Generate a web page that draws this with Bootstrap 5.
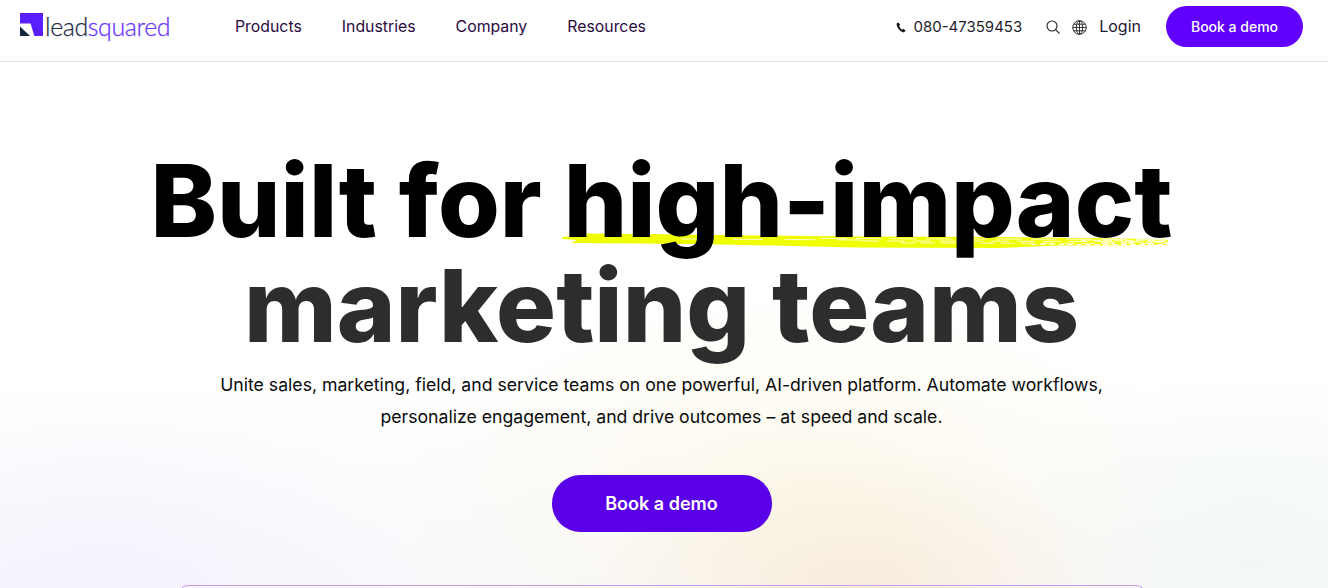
<!DOCTYPE html>
<html lang="en">
<head>
    <meta charset="UTF-8">
    <meta name="viewport" content="width=device-width, initial-scale=1.0">
    <title>LeadSquared</title>
    <link href="https://cdn.jsdelivr.net/npm/bootstrap@5.3.0/dist/css/bootstrap.min.css" rel="stylesheet">
    <style>
        body {
            font-family: "Inter", "Liberation Sans", sans-serif;
            background: #fff;
            height: 588px;
            overflow: hidden;
        }

        .top-bar {
            height: 62px;
            padding: 0 25px 9px 20px;
            border-bottom: 1px solid #e3e3e3;
        }

        .brand-link {
            width: 215px;
            gap: 2px;
        }

        .brand-link svg {
            margin-top: -4px;
        }

        .brand-word {
            font-family: "Lato", sans-serif;
            font-weight: 300;
            font-size: 25px;
            line-height: 1;
            letter-spacing: -0.4px;
            color: #1f2d45;
            -webkit-text-stroke: .25px currentColor;
        }

        .brand-word span {
            color: #6a35ff;
        }

        .menu-links {
            gap: 40px;
            padding-top: 2px;
        }

        .menu-links a {
            font-size: 15.84px;
            color: #2c0a3f;
            text-decoration: none;
        }

        .phone-link {
            font-size: 15px;
            color: #1d1d2b;
            margin-right: 24px;
            padding-top: 2px;
        }

        .phone-link svg {
            margin-right: 7px;
        }

        .nav-glyph {
            margin-top: 2px;
        }

        .login-link {
            font-size: 16px;
            color: #1d1b33;
            margin-left: 12px;
            margin-right: 25px;
            text-decoration: none;
        }

        .demo-btn {
            background: #6200ff;
            color: #fff;
            border: 0;
            border-radius: 50rem;
            font-weight: 500;
        }

        .demo-btn:hover {
            background: #5600e0;
            color: #fff;
        }

        .demo-small {
            width: 137px;
            height: 41px;
            font-size: 14px;
            padding: 0;
        }

        .demo-large {
            width: 220px;
            height: 57px;
            font-size: 18px;
            font-weight: 600;
            background: #5900e8;
            margin-top: 42px;
        }

        .hero-area {
            height: 526px;
            padding: 86px 5px 0 0;
            background:
                radial-gradient(ellipse 260px 140px at 860px 526px, rgba(244, 226, 204, .55), transparent),
                radial-gradient(ellipse 400px 220px at 800px 440px, rgba(252, 247, 224, .65), transparent),
                radial-gradient(ellipse 320px 200px at 100px 526px, rgba(238, 235, 255, .45), transparent),
                radial-gradient(ellipse 240px 170px at 1250px 480px, rgba(234, 247, 240, .5), transparent),
                linear-gradient(#fff 310px, #f9f8fb 100%);
        }

        .hero-title {
            font-size: 100px;
            font-weight: 800;
            line-height: 105px;
            margin: 0;
            color: #000;
            white-space: nowrap;
        }

        .hero-title .second-line {
            display: block;
            color: #2d2d2d;
        }

        .marked-word {
            position: relative;
            display: inline-block;
        }

        .brush-stroke {
            position: absolute;
            left: -3px;
            top: 84px;
            width: 610px;
            height: 18px;
            z-index: -1;
        }

        .title-stack {
            position: relative;
            z-index: 0;
        }

        .hero-copy {
            font-size: 17.65px;
            line-height: 32px;
            color: #0b0b0b;
            margin: 11px 0 0;
        }

        .media-frame {
            width: 968px;
            height: 40px;
            margin-top: 53px;
            border: 1px solid #c79cf2;
            border-radius: 10px;
        }
    </style>
</head>
<body>
    <!-- Navigation Bar -->
    <nav class="top-bar d-flex align-items-center">
        <a class="brand-link d-flex align-items-center text-decoration-none" href="#">
            <svg width="23" height="23" viewBox="0 0 24 24">
                <rect width="24" height="24" fill="#5a1fff"/>
                <path d="M0 11h11l4 13H0z" fill="#fff"/>
                <path d="M0 14 10.500 24H0z" fill="#14233f"/>
            </svg>
            <span class="brand-word">lead<span>squared</span></span>
        </a>
        <div class="menu-links d-flex align-items-center">
            <a href="#">Products</a>
            <a href="#">Industries</a>
            <a href="#">Company</a>
            <a href="#">Resources</a>
        </div>
        <div class="d-flex align-items-center ms-auto">
            <span class="phone-link d-flex align-items-center">
                <svg width="10" height="11" viewBox="0 0 10 11"><path d="M2.300.5 .6 1.600C.3 4.800 3.800 10 8 10.500l1.600-1.900-2.400-1.800-1.200.9C4.800 7.200 3.400 5 3.100 3.600l1.200-.7z" fill="#111"/></svg>
                080-47359453
            </span>
            <svg class="nav-glyph me-2" width="14" height="14" viewBox="0 0 14 14" fill="none" stroke="#222" stroke-width="1.100"><circle cx="6" cy="6" r="5"/><path d="m9.600 9.600 3.900 3.900"/></svg>
            <svg class="nav-glyph ms-1" width="15" height="15" viewBox="0 0 15 15" fill="none" stroke="#222" stroke-width=".9"><circle cx="7.500" cy="7.500" r="6.800"/><ellipse cx="7.500" cy="7.500" rx="3.200" ry="6.800"/><path d="M7.500.7v13.600M.7 7.500h13.600M1.600 4.200h11.800M1.600 10.800h11.800"/></svg>
            <a class="login-link" href="#">Login</a>
            <a class="btn demo-btn demo-small d-flex align-items-center justify-content-center" href="#">Book a demo</a>
        </div>
    </nav>

    <!-- Hero -->
    <section class="hero-area d-flex flex-column align-items-center text-center overflow-hidden">
        <h1 class="hero-title title-stack">
            Built for <span class="marked-word">high-impact
                <svg class="brush-stroke" viewBox="0 0 610 18" preserveAspectRatio="none">
                    <path d="M0 5 20 4 22 1.500 80 2 297 4.500 440 5 520 6 600 7 607 8 607 13 500 13.500 437 16 297 15.500 140 12 10 11 16 8 2 7z" fill="#f0ff00"/>
                    <g fill="none" stroke="#fff" stroke-width=".8">
                        <path d="M120 7 300 8" stroke-dasharray="30 22"/>
                        <path d="M260 6.500 610 7.500" stroke-dasharray="26 9"/>
                        <path d="M300 9 610 9.500" stroke-dasharray="18 8"/>
                        <path d="M340 11 610 11.500" stroke-dasharray="14 6"/>
                        <path d="M470 12.500 610 12.500" stroke-dasharray="6 3"/>
                        <path d="M520 8.300 610 8.300" stroke-dasharray="9 2"/>
                        <path d="M540 10.300 610 10.300" stroke-dasharray="7 2"/>
                    </g>
                </svg>
            </span>
            <span class="second-line">marketing teams</span>
        </h1>
        <p class="hero-copy">
            Unite sales, marketing, field, and service teams on one powerful, AI-driven platform. Automate workflows,<br>
            personalize engagement, and drive outcomes – at speed and scale.
        </p>
        <a class="btn demo-btn demo-large d-flex align-items-center justify-content-center flex-shrink-0" href="#">Book a demo</a>
        <div class="media-frame flex-shrink-0"></div>
    </section>

    <script src="https://cdn.jsdelivr.net/npm/bootstrap@5.3.0/dist/js/bootstrap.bundle.min.js"></script>
</body>
</html>
